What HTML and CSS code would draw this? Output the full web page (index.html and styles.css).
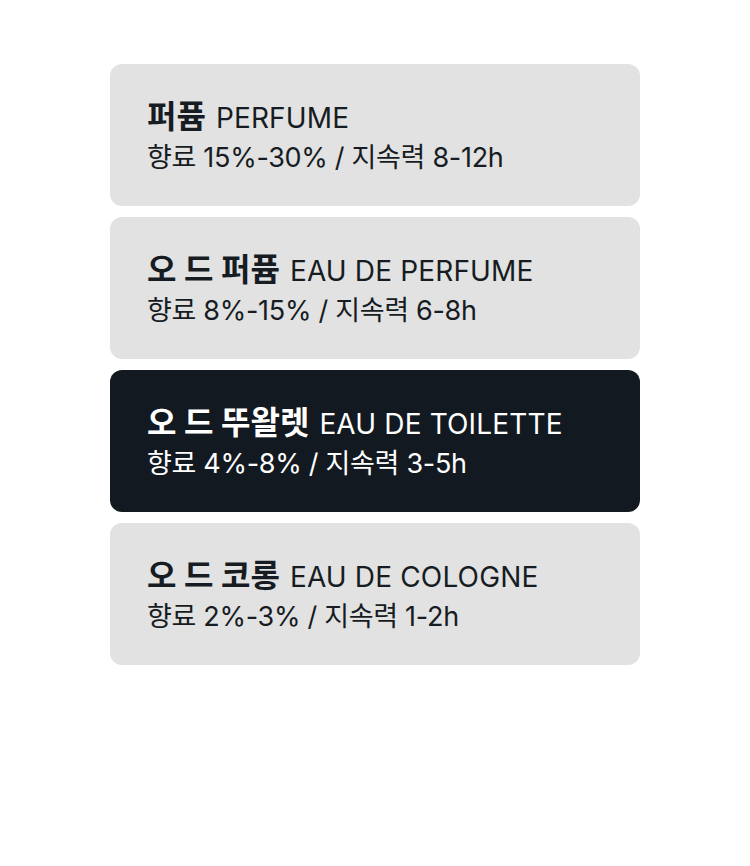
FILE: index.html
```html
<!DOCTYPE html>
<html lang="ko">
<head>
<meta charset="utf-8">
<link rel="stylesheet" href="styles.css">
</head>
<body>
<div class="list">
  <div class="card">
    <div class="title"><strong>퍼퓸</strong> PERFUME</div>
    <div class="sub">향료 15%-30% / 지속력 8-12h</div>
  </div>
  <div class="card">
    <div class="title"><strong>오 드 퍼퓸</strong> EAU DE PERFUME</div>
    <div class="sub">향료 8%-15% / 지속력 6-8h</div>
  </div>
  <div class="card active">
    <div class="title"><strong>오 드 뚜왈렛</strong> EAU DE TOILETTE</div>
    <div class="sub">향료 4%-8% / 지속력 3-5h</div>
  </div>
  <div class="card">
    <div class="title"><strong>오 드 코롱</strong> EAU DE COLOGNE</div>
    <div class="sub">향료 2%-3% / 지속력 1-2h</div>
  </div>
</div>
</body>
</html>
```

FILE: styles.css
```css
html, body {
  margin: 0;
  padding: 0;
  background: #ffffff;
}
body {
  font-family: Inter, "Noto Sans CJK KR", sans-serif;
  color: #161c22;
}
.list {
  width: 530px;
  margin: 64px auto 0;
  display: flex;
  flex-direction: column;
  gap: 11px;
}
.card {
  box-sizing: border-box;
  height: 142px;
  border-radius: 12px;
  background: #e2e2e2;
  padding: 35px 36px 0 37px;
  display: flex;
  flex-direction: column;
  gap: 5px;
}
.card.active {
  background: #121920;
  color: #ffffff;
}
.title {
  font-size: 28px;
  line-height: 36px;
  height: 36px;
  white-space: nowrap;
  letter-spacing: 0.15px;
}
.title strong {
  font-weight: 700;
  font-size: 32px;
  letter-spacing: 0;
  margin-right: 2px;
}
.sub {
  font-size: 27px;
  line-height: 36px;
  white-space: nowrap;
  letter-spacing: -0.3px;
}
```
